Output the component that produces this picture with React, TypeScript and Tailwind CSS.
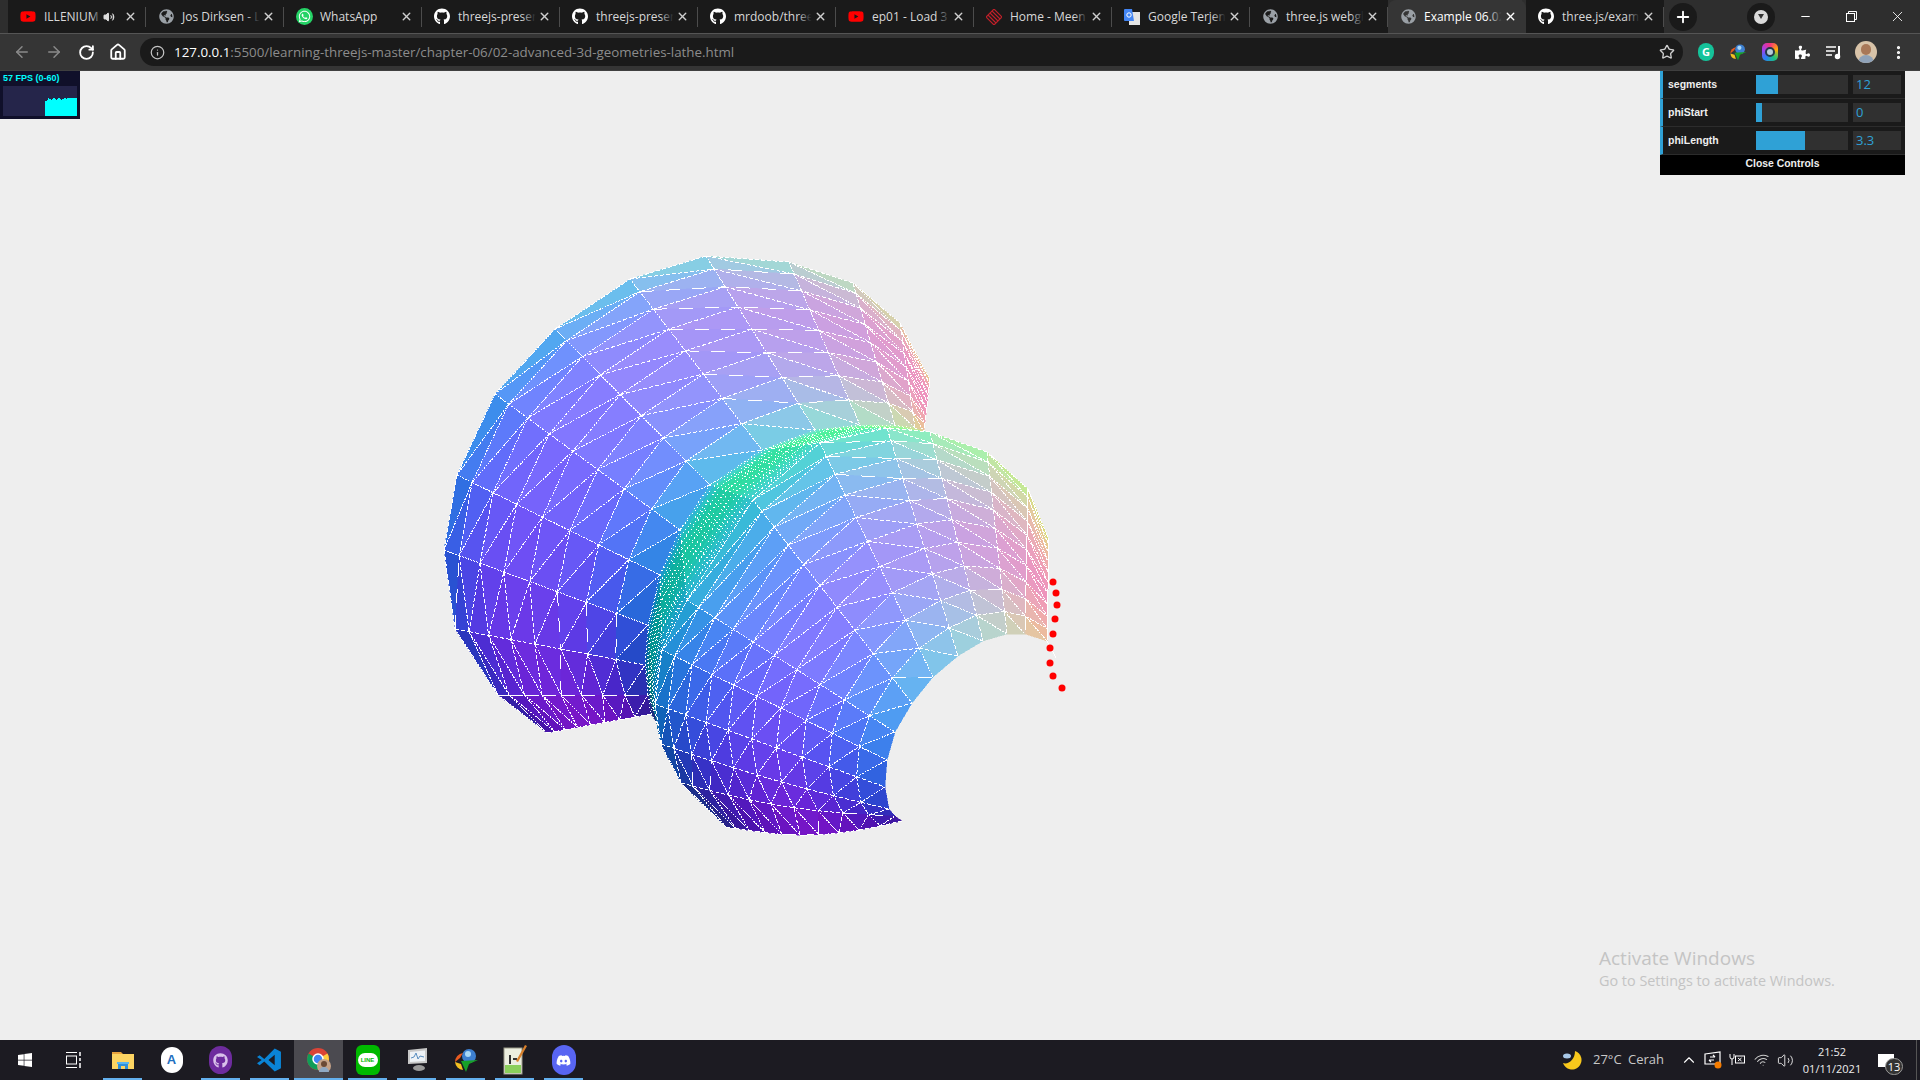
import { ArrowLeft, ArrowRight, ChevronUp, Home, Info, Minus, MoreVertical, Plus, RotateCw, Star, Volume2, Wifi, X } from "lucide-react"
import { FaDiscord, FaGithub, FaGlobeAmericas, FaPuzzlePiece, FaWhatsapp, FaWindows, FaYoutube } from "react-icons/fa"
import type { ReactNode } from "react"

// ---- lathe mesh: key rings of 13 points, read off the picture ----
const keyRings: [number, number[][]][] = [
  [0, [[930,380],[900,323],[853,283],[789,262],[706,256],[630,279],[555,329],[495,394],[457,475],[444,550],[455,629],[498,695],[547,733]]],
  [8, [[924,432],[915,428],[895,425],[860,425],[815,430],[762,450],[710,485],[680,530],[660,575],[648,625],[645,665],[648,695],[651,714]]],
  [19, [[1049,540],[1028,489],[987,452],[930,432],[887,428],[820,443],[753,500],[687,600],[662,650],[655,704],[661,744],[681,783],[726,827]]],
  [29, [[1047,641],[1025,634],[1007,634],[983,641],[958,656],[933,677],[912,703],[895,732],[887,760],[885,787],[889,809],[895,816],[902,821]]],
]
const gammaDeg = [10,30,42,48,48,46,40,27,8,-10,-22,-28,-30,-30,-28,-25,-20,-14,-8,-5,8,20,30,38,44,48,44,36,26,16]

const pts = Array.from({length:30}, (_,i) => {
  let k = 0
  while (k < keyRings.length-2 && keyRings[k+1][0] <= i) k++
  const [ia, a] = keyRings[k], [ib, b] = keyRings[k+1]
  let t = (i-ia)/(ib-ia)
  // the rings right after a silhouette are foreshortened
  if (k !== 1) t = Math.pow(t,1.25)
  return a.map((p,j) => {
    // bottom of the front lobe bellies out a little
    const belly = k === 2 && j > 9 ? 11*Math.sin(Math.PI*t)*(j-9)/3 : 0
    return [p[0]+(b[j][0]-p[0])*t, p[1]+(b[j][1]-p[1])*t+belly]
  })
})
const Uh = [.75,.65,-.08], Vh = [-.42,.57,.70], Wh = [.57,-.43,.69]
const colorAt = (i: number, j: number) => {
  const lo = Math.min(28,Math.floor(i)), g = (gammaDeg[lo]+(gammaDeg[lo+1]-gammaDeg[lo])*(i-lo))*Math.PI/180
  const p = j*0.275
  const n = [0,1,2].map(c => Math.cos(g)*(Math.cos(p)*Uh[c]+Math.sin(p)*Vh[c])+Math.sin(g)*Wh[c])
  const l = Math.hypot(n[0],n[1],n[2])
  const [r,gr,b] = n.map(v => Math.round((v/l*.5+.5)*255))
  return `rgb(${r},${gr},${b})`
}
const dashFor = (a: number[], b: number[], fold: boolean) => {
  if (fold) return "1 3"
  const th = Math.abs(Math.atan2(b[1]-a[1],b[0]-a[0])*180/Math.PI)%90
  const d = Math.min(th,90-th)
  if (d < 4) return "14 12"
  if (d < 20) return "4 2"
  return "2 1"
}
const Seg = ({a,b,fold}: {a:number[];b:number[];fold:boolean}) => (
  <line x1={a[0]} y1={a[1]} x2={b[0]} y2={b[1]} stroke="#fff" strokeWidth={1} strokeDasharray={dashFor(a,b,fold)} />
)

const Strip = ({i}: {i:number}) => {
  const fold = i >= 8 && i < 19
  const cells = []
  for (let j = 0; j < 12; j++) {
    const a = pts[i][j], b = pts[i][j+1], c = pts[i+1][j+1], d = pts[i+1][j]
    cells.push(
      <g key={j}>
        <polygon points={`${b} ${a} ${d}`} fill={colorAt(i+.33,j+.33)} stroke={colorAt(i+.33,j+.33)} strokeWidth={.5} />
        <polygon points={`${b} ${c} ${d}`} fill={colorAt(i+.67,j+.67)} stroke={colorAt(i+.67,j+.67)} strokeWidth={.5} />
      </g>
    )
  }
  const lines = []
  for (let j = 0; j < 12; j++) {
    if (!fold || i % 2 === 0) lines.push(<Seg key={`r${j}`} fold={fold} a={pts[i][j]} b={pts[i][j+1]} />)
    lines.push(<Seg key={`d${j}`} fold={fold} a={pts[i][j+1]} b={pts[i+1][j]} />)
  }
  for (let j = 0; j < 13; j++) lines.push(<Seg key={`m${j}`} fold={fold} a={pts[i][j]} b={pts[i+1][j]} />)
  return <g>{cells}{lines}</g>
}

const dots = [[1053,582],[1056,593],[1057,605],[1055,619],[1053,634],[1050,648],[1050,663],[1053,676],[1062,688]]

const Lathe = () => (
  <svg viewBox="0 71 1920 969" width={1920} height={969} shapeRendering="crispEdges" className="absolute left-0 top-0">
    {Array.from({length:29}, (_,i) => <Strip key={i} i={i} />)}
    <line x1={1047} y1={641} x2={1056} y2={658} stroke="#fff" strokeWidth={1} />
    <g shapeRendering="auto">
      {dots.map(([x,y]) => <circle key={y} cx={x} cy={y} r={3.5} fill="#ff0000" />)}
    </g>
  </svg>
)

// ---- browser chrome ----
const Translate = () => (
  <svg width={16} height={16} viewBox="0 0 16 16">
    <rect x="5" y="3" width="11" height="13" fill="#e4e4e4" />
    <path d="M0 1a1 1 0 0 1 1-1h7l2 12H1a1 1 0 0 1-1-1z" fill="#4285f4" />
    <circle cx="5" cy="6" r="2.2" fill="none" stroke="#fff" strokeWidth="1" />
  </svg>
)
const Meen = () => (
  <svg width={16} height={16} viewBox="0 0 16 16" fill="none" stroke="#c0202a" strokeWidth="1.1">
    <path d="M8 0l8 8-8 8-8-8z" /><path d="M4 4l8 8M6 2l8 8M2 6l8 8" />
  </svg>
)
const Earth = () => <FaGlobeAmericas size={15} className="text-[#9aa0a6]" />
const Gh = () => <FaGithub size={17} className="text-white" />
const Wa = () => (
  <span className="flex h-[17px] w-[17px] shrink-0 items-center justify-center rounded-full bg-[#25d366]"><FaWhatsapp size={13} className="text-white" /></span>
)

const tabs: {title: string; icon: ReactNode; active?: boolean; sound?: boolean}[] = [
  {title: "ILLENIUM", icon: <FaYoutube size={17} className="text-[#ff0000]" />, sound: true},
  {title: "Jos Dirksen - L", icon: <Earth />},
  {title: "WhatsApp", icon: <Wa />},
  {title: "threejs-presen", icon: <Gh />},
  {title: "threejs-presen", icon: <Gh />},
  {title: "mrdoob/three", icon: <Gh />},
  {title: "ep01 - Load 3", icon: <FaYoutube size={17} className="text-[#ff0000]" />},
  {title: "Home - Meen", icon: <Meen />},
  {title: "Google Terjen", icon: <Translate />},
  {title: "three.js webgl", icon: <Earth />},
  {title: "Example 06.02", icon: <Earth />, active: true},
  {title: "three.js/examp", icon: <Gh />},
]

const Tab = ({title, icon, active, sound}: {title: string; icon: ReactNode; active?: boolean; sound?: boolean}) => (
  <div className={`relative flex h-[33px] w-[138px] shrink-0 items-center pl-[12px] ${active ? "rounded-t-[8px] bg-[#353535]" : "bg-[#1a1a1a]"}`}>
    <span className="flex w-[16px] shrink-0 items-center justify-center">{icon}</span>
    <span className={`ml-[8px] whitespace-nowrap text-[12px] ${active ? "text-white" : "text-[#d8d8d8]"}`}>{title}</span>
    {sound && <span className="absolute left-[83px] flex h-full w-[24px] items-center justify-end bg-[linear-gradient(to_right,transparent,#1a1a1a_45%)]"><Volume2 size={12} className="text-[#ddd]" fill="#ddd" /></span>}
    {!sound && <span className={`absolute left-[100px] h-full w-[34px] ${active ? "bg-[linear-gradient(to_right,transparent,#353535_40%)]" : "bg-[linear-gradient(to_right,transparent,#1a1a1a_40%)]"}`} />}
    <X size={13} strokeWidth={2.6} className={`absolute right-[9px] ${active ? "text-white" : "text-[#cfcfcf]"}`} />
    {!active && <span className="absolute right-0 h-[20px] w-px bg-[#4c4c4c]" />}
  </div>
)

const ToolBtn = ({children}: {children: ReactNode}) => (
  <div className="flex h-[32px] w-[32px] shrink-0 items-center justify-center">{children}</div>
)

const Slider = ({label, pct, value}: {label: string; pct: number; value: string}) => (
  <div className="flex h-[28px] items-center border-b border-[#2c2c2c] border-l-[3px] border-l-[#2fa1d6] bg-[#1a1a1a] pl-[5px]">
    <span className="w-[88px] font-['Liberation_Sans',sans-serif] text-[10.5px] font-bold text-[#eeeeee]">{label}</span>
    <div className="h-[19px] w-[92px] bg-[#303030]">
      <div className="h-full bg-[#2fa1d6]" style={{width: `${pct}%`}} />
    </div>
    <div className="ml-[5px] flex h-[19px] w-[48px] items-center bg-[#303030] pl-[3px] font-['Open_Sans',sans-serif] text-[13px] text-[#2fa1d6]">{value}</div>
  </div>
)

const Controls = () => (
  <div className="absolute right-[15px] top-0 w-[245px]">
    <Slider label="segments" pct={24} value="12" />
    <Slider label="phiStart" pct={7} value="0" />
    <Slider label="phiLength" pct={53} value="3.3" />
    <div className="flex h-[20px] items-center justify-center bg-black pb-[2px] font-['Liberation_Sans',sans-serif] text-[10.4px] font-bold text-[#eeeeee]">Close Controls</div>
  </div>
)

const fpsBars = [15,15,16,18,17,17,16,17,18,18,17,16,17,18,18,17,16,17,17,18,18,17,18,18,18,18,18,18,18,18,18,18]
const Fps = () => (
  <div className="absolute left-0 top-0 h-[48px] w-[80px] bg-[#10102a] px-[3px]">
    <div className="h-[15px] font-['Liberation_Sans',sans-serif] text-[9px] font-bold leading-[15px] text-[#00ffff]">57 FPS (0-60)</div>
    <div className="flex h-[30px] w-[74px] items-end justify-end bg-[#25254a]">
      {fpsBars.map((h,i) => <div key={i} className="w-px bg-[#00ffff]" style={{height: h}} />)}
    </div>
  </div>
)

const Chrome = () => (
  <svg width={24} height={24} viewBox="0 0 24 24">
    <circle cx="11" cy="11" r="11" fill="#db4437" />
    <path d="M11 11L1.5 5.5A11 11 0 0 0 11 22z" fill="#0f9d58" />
    <path d="M11 11V22A11 11 0 0 0 20.5 5.5z" fill="#ffcd40" />
    <circle cx="11" cy="11" r="5" fill="#4285f4" stroke="#fff" strokeWidth="1.5" />
    <circle cx="17" cy="18" r="7" fill="#c4a288" />
    <circle cx="17" cy="16" r="3" fill="#6b4a36" />
    <path d="M12 24a5 5 0 0 1 10 0z" fill="#8fa9c4" />
  </svg>
)
const Folder = () => (
  <svg width={24} height={24} viewBox="0 0 24 24">
    <path d="M1 4h9l2 2H1z" fill="#e8a33d" />
    <rect x="1" y="6" width="22" height="15" fill="#fcd462" />
    <path d="M7 21v-6h10v6h-3v-3h-4v3z" fill="#2f8fd8" />
    <rect x="6" y="14" width="12" height="2" fill="#56b4ef" />
  </svg>
)
const VsCode = () => (
  <svg width={25} height={30} viewBox="0 0 24 24">
    <path d="M17 1l6 3v16l-6 3-10-9.5-4.500 3.500L0 15l4.500-3L0 9l2.500-1.500L7 11zM17 7l-6 5 6 5z" fill="#0a84d6" fillRule="evenodd" />
  </svg>
)
const Line = () => (
  <div className="flex h-[30px] w-[24px] items-center justify-center rounded-[6px] bg-[#00b900]">
    <div className="flex h-[14px] w-[20px] items-center justify-center rounded-full bg-white font-['Liberation_Sans',sans-serif] text-[6px] font-bold text-[#00b900]">LINE</div>
  </div>
)
const Monitor = () => (
  <svg width={24} height={26} viewBox="0 0 24 26">
    <path d="M3 3l19-2v15L3 17z" fill="#c8c8c8" />
    <path d="M5 5l15-1.500V14L5 15z" fill="#eef2f6" />
    <path d="M6 11l3-1 2-4 2 6 2-3 4 1" fill="none" stroke="#5a8ec0" strokeWidth="1" />
    <ellipse cx="14" cy="21" rx="6" ry="3" fill="#9a9a9a" />
  </svg>
)
const Idm = ({size = 26}: {size?: number}) => (
  <svg width={size} height={size} viewBox="0 0 26 26">
    <circle cx="16" cy="9" r="7" fill="#3d7fd0" />
    <circle cx="15" cy="7" r="3" fill="#a8d8f8" />
    <path d="M2 15a9 9 0 0 1 8-9l-3 5z" fill="#e85a20" />
    <path d="M2 15a9 9 0 0 0 8 8l-2-6z" fill="#f4c020" />
    <path d="M8 14l17-1-9 4-3 8z" fill="#18a028" />
  </svg>
)
const Notepad = () => (
  <svg width={24} height={30} viewBox="0 0 24 30">
    <rect x="1" y="3" width="18" height="26" fill="#eceee0" stroke="#9a9a88" />
    <rect x="2" y="20" width="16" height="8" fill="#8bcf5c" />
    <rect x="6" y="10" width="2" height="9" fill="#333" />
    <rect x="10" y="13" width="4" height="2" fill="#333" />
    <path d="M22 0l2 1-9 16-2-1z" fill="#d8802c" />
  </svg>
)

const taskIcons: {icon: ReactNode; on?: boolean; active?: boolean}[] = [
  {icon: <FaWindows size={16} className="text-white" />},
  {icon: (
    <svg width={16} height={16} viewBox="0 0 16 16" fill="none" stroke="#fff" strokeWidth="1">
      <path d="M0 .5h11M0 15.500h11" /><rect x=".5" y="4" width="10" height="8" /><path d="M14 0v4M14 6v3M14 11v5" strokeWidth="1.500" />
    </svg>
  )},
  {icon: <Folder />, on: true},
  {icon: (
    <div className="flex h-[26px] w-[22px] items-center justify-center rounded-full bg-white font-['Liberation_Sans',sans-serif] text-[13px] font-bold text-[#1f6fc0]">A</div>
  )},
  {icon: (
    <div className="flex h-[28px] w-[23px] items-center justify-center rounded-full bg-[#6e2c9e]"><FaGithub size={15} className="text-[#d9c2ea]" /></div>
  ), on: true},
  {icon: <VsCode />, on: true},
  {icon: <Chrome />, on: true, active: true},
  {icon: <Line />, on: true},
  {icon: <Monitor />, on: true},
  {icon: <Idm />, on: true},
  {icon: <Notepad />, on: true},
  {icon: <div className="flex h-[30px] w-[24px] items-center justify-center rounded-full bg-[#5865f2]"><FaDiscord size={15} className="text-white" /></div>, on: true},
]

const TaskIcon = ({icon, on, active}: {icon: ReactNode; on?: boolean; active?: boolean}) => (
  <div className={`relative flex h-[40px] w-[49px] shrink-0 items-center justify-center ${active ? "bg-[#4b4a50]" : ""}`}>
    {icon}
    {on && <span className={`absolute bottom-0 h-[2px] bg-[#63b0ee] ${active ? "inset-x-0" : "inset-x-[5px]"}`} />}
  </div>
)

const Tray = () => (
  <div className="ml-auto flex h-full items-center font-['Open_Sans',sans-serif] text-white">
    <div className="flex w-[28px] justify-center">
      <svg width={20} height={20} viewBox="0 0 20 20">
        <path d="M13 1a9.500 9.500 0 1 1-12 12c5 2 12-3 12-12z" fill="#f8c81c" />
        <ellipse cx="5" cy="6" rx="4" ry="2.500" fill="#a8c8e8" />
      </svg>
    </div>
    <div className="ml-[7px] flex w-[71px] justify-between whitespace-nowrap text-[13px] text-[#c8c8c8]"><span>27°C</span><span>Cerah</span></div>
    <div className="ml-[13px] flex w-[24px] justify-center"><ChevronUp size={18} strokeWidth={1.5} /></div>
    <div className="flex w-[24px] justify-center">
      <svg width={18} height={18} viewBox="0 0 18 18" fill="none" stroke="#fff" strokeWidth="1.200">
        <path d="M1 3l15-2v12H1z" /><path d="M6 6h5M11 6l-2-2M10 9H5M5 9l2 2" />
        <circle cx="14" cy="14" r="3.500" fill="#f57c00" stroke="none" />
      </svg>
    </div>
    <div className="flex w-[24px] justify-center">
      <svg width={16} height={14} viewBox="0 0 16 14" fill="none" stroke="#fff" strokeWidth="1">
        <path d="M1 1v3a2 2 0 0 0 4 0V1M3 6v6" /><rect x="6.500" y="3" width="9" height="7" /><path d="M9 5l3.500 3M12.500 5L9 8" />
      </svg>
    </div>
    <div className="ml-px flex w-[24px] justify-center"><Wifi size={16} className="-rotate-12 text-[#ccc]" strokeWidth={1.5} /></div>
    <div className="flex w-[22px] justify-center"><Volume2 size={17} strokeWidth={1.2} /></div>
    <div className="flex w-[72px] flex-col items-center text-[11px] leading-[17px] text-[#eee]"><span>21:52</span><span>01/11/2021</span></div>
    <div className="relative flex h-full w-[48px] items-center pl-[10px]">
      <div className="h-[13px] w-[16px] bg-white" />
      <div className="absolute left-[17px] top-[18px] flex h-[17px] w-[18px] items-center justify-center rounded-full border border-[#999] bg-[#333] text-[11px] leading-none">13</div>
    </div>
    <div className="h-full w-[4px] border-l border-[#555]" />
  </div>
)

export default function App() {
  return (
    <div className="flex h-[1080px] w-[1920px] flex-col overflow-hidden bg-[#eeeeee] font-['Open_Sans',sans-serif]">
      <div className="flex h-[33px] shrink-0 items-center bg-[#2e2e2e] pl-[8px]">
        {tabs.map((t,i) => <Tab key={i} {...t} />)}
        <div className="ml-[5px] flex h-[28px] w-[28px] items-center justify-center rounded-full bg-[#1a1a1a]"><Plus size={18} strokeWidth={2.5} className="text-white" /></div>
        <div className="ml-[50px] flex h-[28px] w-[28px] items-center justify-center rounded-full bg-[#1a1a1a]">
          <div className="flex h-[14px] w-[14px] items-center justify-center rounded-full bg-[#dadada]"><span className="h-0 w-0 border-x-[3.500px] border-t-[5px] border-x-transparent border-t-[#333]" /></div>
        </div>
        <div className="ml-[7px] flex w-[46px] justify-center"><Minus size={13} className="text-white" /></div>
        <div className="flex w-[46px] justify-center">
          <svg width={11} height={11} viewBox="0 0 11 11" fill="none" stroke="#fff" strokeWidth="1"><rect x=".5" y="2.500" width="8" height="8" /><path d="M2.500 2.500v-2h8v8h-2" /></svg>
        </div>
        <div className="flex w-[46px] justify-center"><X size={17} strokeWidth={1.2} className="text-white" /></div>
      </div>
      <div className="flex h-[38px] shrink-0 items-center border-t border-t-[#555] border-b border-b-[#3f3f3f] bg-[#353535] pl-[6px]">
        <ToolBtn><ArrowLeft size={18} className="text-[#8a8a8a]" /></ToolBtn>
        <ToolBtn><ArrowRight size={18} className="text-[#8a8a8a]" /></ToolBtn>
        <ToolBtn><RotateCw size={17} strokeWidth={2.6} className="text-white" /></ToolBtn>
        <ToolBtn><Home size={18} strokeWidth={2.4} className="text-white" /></ToolBtn>
        <div className="ml-[6px] flex h-[28px] w-[1543px] shrink-0 items-center rounded-full bg-[#1a1a1a] pl-[10px] pr-[8px]">
          <Info size={15} className="text-[#c4c4c4]" />
          <span className="ml-[9px] whitespace-nowrap text-[13.35px]">
            <span className="text-white">127.0.0.1</span>
            <span className="text-[#8c8c8c]">:5500/learning-threejs-master/chapter-06/02-advanced-3d-geometries-lathe.html</span>
          </span>
          <Star size={16} className="ml-auto text-[#d0d0d0]" />
        </div>
        <div className="ml-[7px] flex">
          <ToolBtn><div className="flex h-[18px] w-[16px] items-center justify-center rounded-full bg-[#15c39a] text-[11px] font-bold text-white">G</div></ToolBtn>
          <ToolBtn><Idm size={18} /></ToolBtn>
          <ToolBtn>
            <div className="flex h-[18px] w-[16px] items-center justify-center rounded-[5px] bg-[conic-gradient(#f5317f,#ffb000,#19c37d,#2a7ff6,#a040f0,#f5317f)]"><div className="h-[10px] w-[10px] rounded-full border-2 border-[#24384a] bg-[#b8ccd8]" /></div>
          </ToolBtn>
          <ToolBtn><FaPuzzlePiece size={15} className="text-white" /></ToolBtn>
          <ToolBtn>
            <svg width={16} height={16} viewBox="0 0 16 16" fill="none" stroke="#fff" strokeWidth="1.500"><path d="M0 3h10M0 7h9M0 11h6" /><path d="M13 2v10" strokeWidth="2" /><circle cx="11.500" cy="12.500" r="2" fill="#fff" /></svg>
          </ToolBtn>
          <ToolBtn>
            <div className="relative h-[22px] w-[22px] overflow-hidden rounded-full bg-[#d8c3a8]">
              <div className="absolute left-[6px] top-[3px] h-[11px] w-[10px] rounded-full bg-[#a87858]" />
              <div className="absolute bottom-0 left-[3px] h-[8px] w-[16px] rounded-t-full bg-[#8fa2b8]" />
            </div>
          </ToolBtn>
          <ToolBtn><MoreVertical size={17} strokeWidth={2.5} className="text-white" /></ToolBtn>
        </div>
      </div>
      <main className="relative flex-1">
        <Lathe />
        <Fps />
        <Controls />
        <div className="absolute left-[1599px] top-[873px] text-[#c4c4c4]">
          <div className="text-[19px] leading-[28px]">Activate Windows</div>
          <div className="text-[14.4px] leading-[18px]">Go to Settings to activate Windows.</div>
        </div>
      </main>
      <footer className="flex h-[40px] shrink-0 items-center bg-[#1c1b22]">
        {taskIcons.map((t,i) => <TaskIcon key={i} {...t} />)}
        <Tray />
      </footer>
    </div>
  )
}
